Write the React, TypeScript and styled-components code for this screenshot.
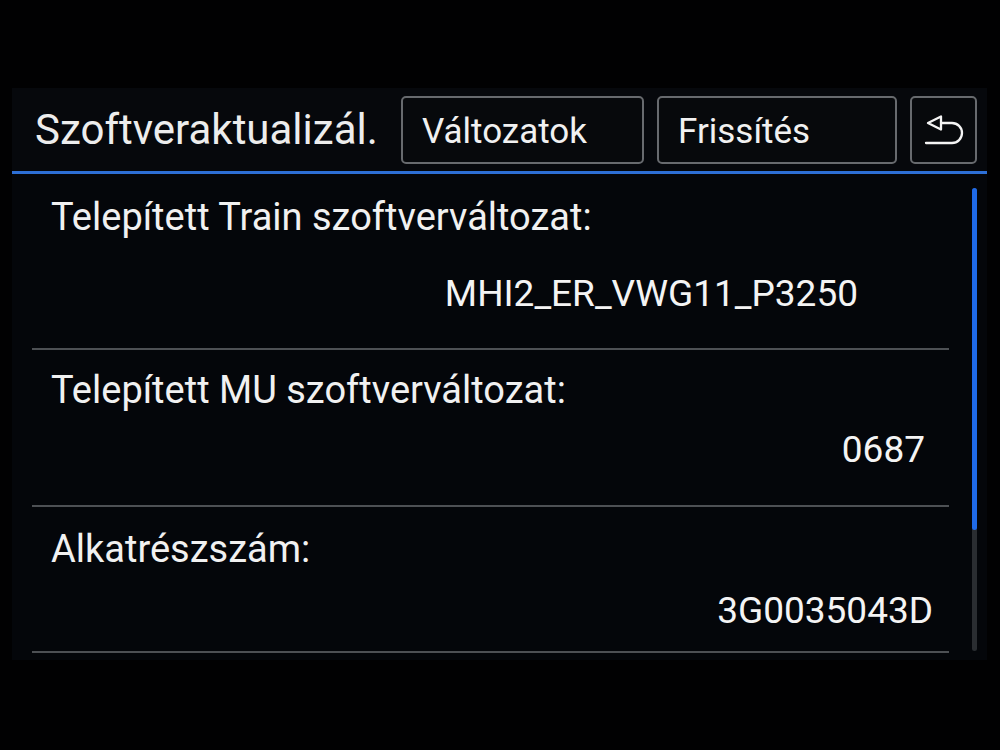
import styled, { createGlobalStyle } from 'styled-components';

const GlobalStyle = createGlobalStyle`
  html, body {
    margin: 0;
    padding: 0;
    background: #000;
  }
  body {
    font-family: Roboto, "Liberation Sans", sans-serif;
    color: #f1f1f1;
  }
`;

const Screen = styled.div`
  width: 1000px;
  height: 750px;
  padding-top: 88px;
  box-sizing: border-box;
  background: #010102;
  overflow: hidden;
`;

const Panel = styled.div`
  margin-left: 12px;
  width: 975px;
  height: 572px;
  background: #04060a;
  display: flex;
  flex-direction: column;
`;

const Header = styled.header`
  height: 83px;
  display: flex;
  align-items: center;
  gap: 13px;
  padding: 0 10px 0 23px;
  box-sizing: border-box;
  background: #06080c;
`;

const Title = styled.h1`
  flex: 1;
  margin: 0;
  font-size: 42px;
  font-weight: 400;
  line-height: 48px;
  color: #ededed;
`;

const TabButton = styled.button<{ $width: number }>`
  width: ${({ $width }) => $width}px;
  height: 68px;
  box-sizing: border-box;
  border: 2px solid #676a6e;
  border-radius: 5px;
  background: #07090c;
  color: #f1f1f1;
  font-family: Roboto, "Liberation Sans", sans-serif;
  font-size: 35px;
  text-align: left;
  padding: 3px 0 0 19px;
  display: flex;
  align-items: center;
  justify-content: flex-start;
`;

const IconButton = styled(TabButton)`
  padding: 0;
  justify-content: center;
`;

const BlueRule = styled.div`
  height: 3px;
  background: #2d6fd6;
`;

const Body = styled.div`
  flex: 1;
  display: flex;
`;

const List = styled.div`
  margin-left: 20px;
  width: 917px;
  display: flex;
  flex-direction: column;
`;

const Row = styled.div<{ $top: number; $gap: number; $bottom: number }>`
  display: flex;
  flex-direction: column;
  gap: ${({ $gap }) => $gap}px;
  padding: ${({ $top }) => $top}px 0 ${({ $bottom }) => $bottom}px 19px;
  border-bottom: 2px solid #4d5054;
`;

const Label = styled.div`
  font-size: 38px;
  line-height: 44px;
  color: #f1f1f1;
`;

const Value = styled.div<{ $inset: number }>`
  font-size: 37px;
  line-height: 44px;
  text-align: right;
  padding-right: ${({ $inset }) => $inset}px;
  color: #f4f4f4;
`;

const ScrollTrack = styled.div`
  margin: 14px 0 9px 23px;
  width: 5px;
  border-radius: 3px;
  background: #2a2d31;
  display: flex;
  flex-direction: column;
`;

const ScrollThumb = styled.div`
  height: 342px;
  border-radius: 3px;
  background: #1f6ae8;
`;

const BackIcon = () => (
  <svg width="63" height="64" viewBox="0 0 63 64" fill="none">
    <path d="M16 25 L29 18.5 L29 31.5 Z" stroke="#f4f4f4" strokeWidth="2.3" strokeLinejoin="round" />
    <path d="M29 25 H40 A10 10 0 0 1 40 45 H14" stroke="#f4f4f4" strokeWidth="2.3" strokeLinecap="round" />
  </svg>
);

const rows = [
  { label: 'Telepített Train szoftverváltozat:', value: 'MHI2_ER_VWG11_P3250', inset: 91, top: 21, gap: 33, bottom: 32 },
  { label: 'Telepített MU szoftverváltozat:', value: '0687', inset: 24, top: 18, gap: 16, bottom: 33 },
  { label: 'Alkatrészszám:', value: '3G0035043D', inset: 16, top: 20, gap: 18, bottom: 18 },
];

export default function App() {
  return (
    <>
      <GlobalStyle />
      <Screen>
        <Panel>
          <Header>
            <Title>Szoftveraktualizál.</Title>
            <TabButton $width={243}>Változatok</TabButton>
            <TabButton $width={240}>Frissítés</TabButton>
            <IconButton $width={67} aria-label="Vissza">
              <BackIcon />
            </IconButton>
          </Header>
          <BlueRule />
          <Body>
            <List>
              {rows.map(row => (
                <Row key={row.label} $top={row.top} $gap={row.gap} $bottom={row.bottom}>
                  <Label>{row.label}</Label>
                  <Value $inset={row.inset}>{row.value}</Value>
                </Row>
              ))}
            </List>
            <ScrollTrack>
              <ScrollThumb />
            </ScrollTrack>
          </Body>
        </Panel>
      </Screen>
    </>
  );
}
